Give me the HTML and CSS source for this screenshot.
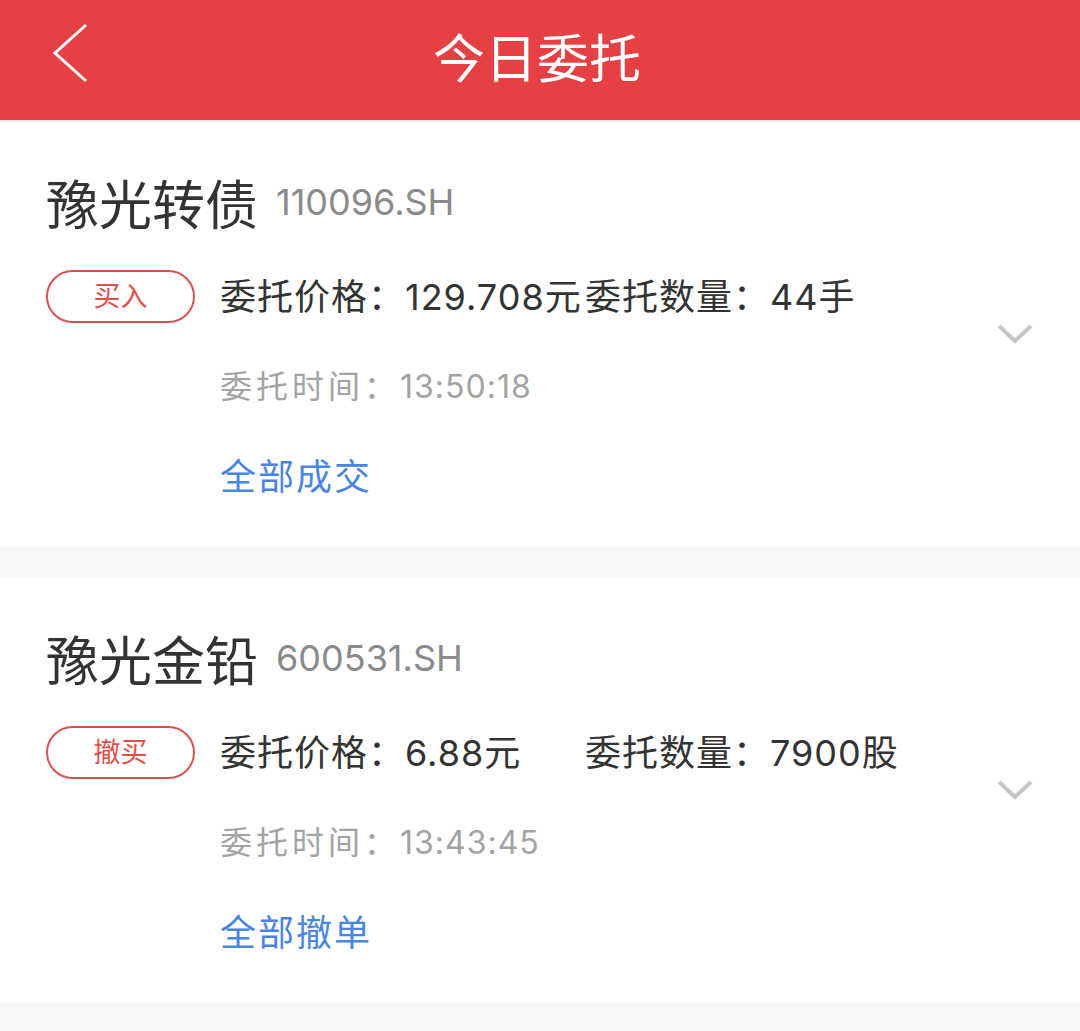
FILE: index.html
```html
<!DOCTYPE html>
<html lang="zh-CN">
<head>
    <meta charset="UTF-8">
    <meta name="viewport" content="width=device-width, initial-scale=1.0">
    <title>今日委托</title>
    <link rel="stylesheet" href="styles.css">
</head>
<body>
    <header class="topbar">
        <a class="back" href="#">
            <svg width="100" height="120" viewBox="0 0 100 120">
                <polyline points="86,25 55,53 86,81" fill="none" stroke="#fff" stroke-width="3"/>
            </svg>
        </a>
        <h1 class="title">今日委托</h1>
        <span class="spacer"></span>
    </header>

    <div class="list">
        <div class="card">
            <div class="main">
                <div class="name-row">
                    <span class="name">豫光转债</span>
                    <span class="code">110096.SH</span>
                </div>
                <div class="body">
                    <div class="side">
                        <span class="badge">买入</span>
                    </div>
                    <div class="info">
                        <p class="row"><span class="price">委托价格：129.708元</span><span>委托数量：44手</span></p>
                        <p class="row time"><span class="label">委托时间：</span>13:50:18</p>
                        <p class="row action">全部成交</p>
                    </div>
                </div>
            </div>
            <svg class="arrow" width="36" height="20" viewBox="0 0 36 20">
                <polyline points="2,2 18,17 34,2" fill="none" stroke="#c6c6c6" stroke-width="4"/>
            </svg>
        </div>

        <div class="card">
            <div class="main">
                <div class="name-row">
                    <span class="name">豫光金铅</span>
                    <span class="code">600531.SH</span>
                </div>
                <div class="body">
                    <div class="side">
                        <span class="badge">撤买</span>
                    </div>
                    <div class="info">
                        <p class="row"><span class="price">委托价格：6.88元</span><span>委托数量：7900股</span></p>
                        <p class="row time"><span class="label">委托时间：</span>13:43:45</p>
                        <p class="row action">全部撤单</p>
                    </div>
                </div>
            </div>
            <svg class="arrow" width="36" height="20" viewBox="0 0 36 20">
                <polyline points="2,2 18,17 34,2" fill="none" stroke="#c6c6c6" stroke-width="4"/>
            </svg>
        </div>
    </div>
</body>
</html>
```

FILE: styles.css
```css
body {
    margin: 0;
    padding: 0;
    background-color: #f7f8fa;
    font-family: Inter, "Noto Sans CJK SC", sans-serif;
    color: #333;
}

.topbar {
    display: flex;
    align-items: center;
    height: 120px;
    background-color: #e54044;
    border-bottom: 2px solid #e6e9e4;
}

.back {
    display: block;
    width: 100px;
    height: 120px;
}

.back svg {
    display: block;
}

.title {
    flex: 1;
    margin: 0;
    text-align: center;
    color: #fff;
    font-size: 52px;
    font-weight: normal;
    line-height: 120px;
    margin-right: 6px;
}

.spacer {
    width: 100px;
}

.list {
    display: flex;
    flex-direction: column;
    gap: 32px;
}

.card {
    display: flex;
    align-items: center;
    background-color: #fff;
    padding: 0 47px 0 46px;
}

.main {
    flex: 1;
    padding: 50px 0 24px;
}

.name-row {
    display: flex;
    align-items: center;
    height: 60px;
}

.name {
    font-size: 53px;
    color: #333;
}

.code {
    font-size: 36px;
    color: #8a8a8a;
    margin-left: 18px;
}

.body {
    display: flex;
    margin-top: 20px;
}

.side {
    width: 174px;
}

.badge {
    display: block;
    width: 145px;
    height: 49px;
    margin-top: 18px;
    border: 2px solid #d9514f;
    border-radius: 27px;
    text-align: center;
    line-height: 49px;
    font-size: 27px;
    color: #de4f4c;
}

.info {
    flex: 1;
}

.row {
    margin: 0;
    height: 90px;
    line-height: 90px;
    font-size: 36px;
    letter-spacing: 1px;
    white-space: nowrap;
}

.price {
    display: inline-block;
    min-width: 365px;
}

.time {
    font-size: 32px;
    color: #a3a3a3;
}

.time .label {
    letter-spacing: 4px;
}

.action {
    color: #4a85e0;
    letter-spacing: 2px;
}

.arrow {
    display: block;
}
```
